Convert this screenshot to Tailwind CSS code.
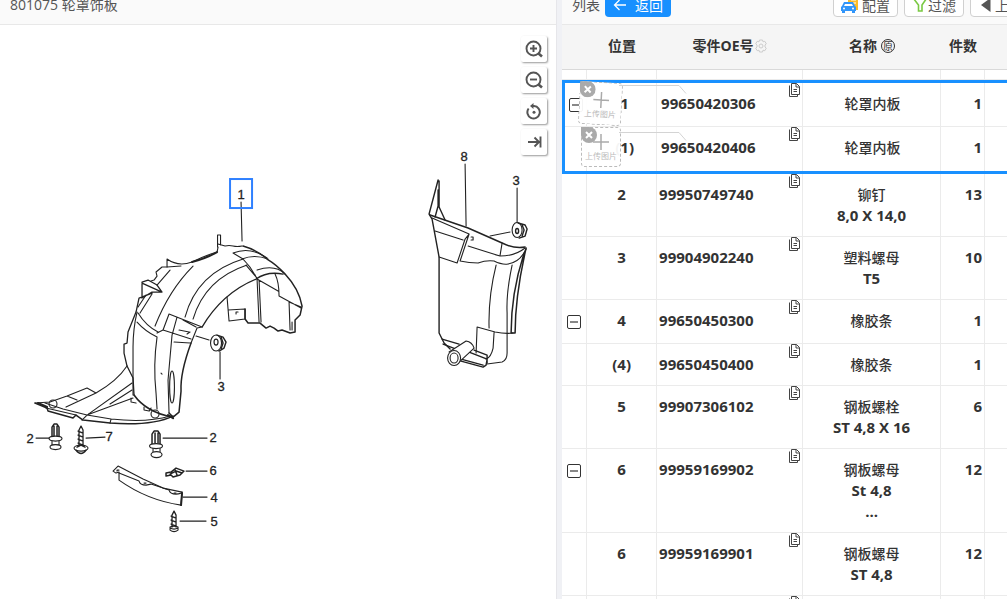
<!DOCTYPE html>
<html lang="zh-CN">
<head>
    <meta charset="UTF-8">
    <meta name="viewport" content="width=device-width, initial-scale=1.0">
    <title>801075 轮罩饰板</title>
    <script src="https://cdn.jsdelivr.net/npm/@tailwindcss/browser@4"></script>
</head>
<body class="h-screen overflow-hidden bg-white text-[14px] text-[#333] font-['Open_Sans','Noto_Sans_CJK_SC',sans-serif]">
    <div class="grid grid-cols-[5fr_6px_4fr] h-full">

        <!-- Diagram panel -->
        <section class="flex flex-col min-w-0 overflow-hidden">
            <header class="flex items-end h-[25px] shrink-0 px-2.5 pb-2 bg-[#fafafa] border-b border-[#e8e8e8]">
                <h1 class="leading-[22px] text-[#555]">801075 轮罩饰板</h1>
            </header>
            <div class="relative flex-1 min-h-0">
                <svg class="w-full" viewBox="0 25 556 574" fill="none" stroke="#222" stroke-width="1.1" stroke-linejoin="round" stroke-linecap="round" role="img" aria-label="轮罩饰板">
                    <!-- wheel housing liner -->
                    <g>
                        <path d="M217.500 247V235h3v10M218 244l7 2q4-1 8 0t9 0M218 247l-1 5q-11 3-25 10-14 5-25-3v8l14-1"/>
                        <path d="M217 252q-10 6-25 10" stroke-width="2"/>
                        <path d="M167 267h-5l-6 5 1 4-3 4-3 1M170 270l-13 15"/>
                        <path d="M142 282l6-2 9 5 5 7h-10l-10 6zM142 283l20 9M152 293l-13 5-3 14-8 20-1 11-3 1v9l3 13 6 12 1 17" stroke-width="1.300"/>
                        <path d="M152 294l-12 19M146 295l-8 12M137 312q-4 17-4 35v48M138 313q8 13 20 19M137 322q8 9 20 15M157 337q-4 28-1 56l1 16"/>
                        <path d="M193 266q-24 24-38 60M243 259q-46 14-58 58M247 265q-42 14-54 54"/>
                        <path d="M283 274q-16-3-27 5-34 14-54 48" stroke-width="1.300"/>
                        <path d="M233 253q17-7 34 5M242 259q12-5 26 0M246 265l11 13M233 253l10 6q9 9 14 20M257 270q18-6 28 4"/>
                        <path d="M243 246q14 4 24 13 10 6 18 15 14 15 17 32l-2 9-5 5v12l-5 1-8-3-4 1-4-3-4-2-4 2-6-5h-12l-3-4v-10" stroke-width="1.500"/>
                        <path d="M227 297l2 24 16-2v-10l-17 1M236 314v-2h2M257 279l2 43M259 280l2 42M257 279l21 12M275 274q4 8 4 22l22 12M289 302l1 28M289 302l12 5M292 322v8"/>
                        <path d="M169 314l33 13-5 1-6 15M169 314l-6 16-6 3M163 330l28 9M177 317l-5 18-4 45 1 33M174 342l16 1M183 320l13 7M179 330l10 2M187 334l3-2" />
                        <path d="M191 343q-11 30-10 48l-2 21-6 5-4-4" stroke-width="1.500"/>
                        <ellipse cx="172" cy="387" rx="2.400" ry="16"/>
                        <path d="M161 373l1 1M196 336l13 4"/>
                    </g>
                    <!-- front lip -->
                    <g>
                        <path d="M35 403l15-1 17-6 20-8 9 5-30 14M67 396l10 4M96 393q21-12 31-27"/>
                        <path d="M35 403l12 5 1 3 25 7 3-3 7 5 27 3q42 3 63-7" stroke-width="1.500"/>
                        <path d="M45 403l18 6 24 6 24 4q36 4 59-3M46 408l30 7M82 420l5-5M110 423l1-4M87 415l45-32M87 415l46-17M110 404l22-14"/>
                        <path d="M134 395q12 17 38 22" stroke-width="1.600"/>
                        <path d="M131 398v4l5 1M144 407v3l5 1 2-3"/>
                        <circle cx="155" cy="414" r="4"/>
                        <circle cx="53" cy="404" r="4"/>
                        <path d="M38 403l9 4M168 415l5 3" stroke-width="2.200"/>
                    </g>
                    <!-- nuts -->
                    <g>
                        <ellipse cx="216" cy="343" rx="5.500" ry="8"/>
                        <ellipse cx="216" cy="342" rx="2" ry="3" stroke-width="1.200"/>
                        <path d="M217 335l6 2 3 5-2 6-5 3M221 337l2 6-2 6" stroke-width="1.400"/>
                    </g>
                    <g>
                        <ellipse cx="517" cy="230" rx="5" ry="7.500"/>
                        <ellipse cx="517" cy="231" rx="1.500" ry="2.500" stroke-width="1.400"/>
                        <path d="M518 223l7 2 2 4-2 7-6 2M522 225l2 5-2 6" stroke-width="1.400"/>
                    </g>
                    <!-- push clips -->
                    <g fill="#fff">
                        <path d="M52 438v-11l2-3h3l2 3v11zM54 426v10M57 426v10" stroke-width="1.500"/>
                        <path d="M52 440v5h7v-5"/>
                        <ellipse cx="55.500" cy="438.500" rx="6.500" ry="2.500"/>
                        <ellipse cx="55.500" cy="447" rx="5.500" ry="2.500"/>
                        <path d="M152 445v-11l2-3h4l2 3v11zM155 433v10M158 433v10" stroke-width="1.500"/>
                        <path d="M153 447v6h7v-6"/>
                        <ellipse cx="156" cy="446" rx="6.500" ry="2.500"/>
                        <ellipse cx="156.500" cy="454.500" rx="5.500" ry="3"/>
                    </g>
                    <!-- screws -->
                    <g>
                        <path d="M81 426l-2 4v15M81 426l2 4v15M78 431l5 2M78 435l5 2M78 439l5 2M78 443l5 2" stroke-width="1.300"/>
                        <ellipse cx="81" cy="448" rx="7" ry="3"/>
                        <path d="M76 450q5 7 10 0M77 447l4-2 4 2" stroke-width="1.500"/>
                        <path d="M174 511l-2 4v12M174 511l2 4v12M171 516l5 2M171 520l5 2M171 524l5 2" stroke-width="1.300"/>
                        <path d="M170 527q4-2 8 0v3q-4 3-8 0zM170 528q4 2 8 0"/>
                    </g>
                    <!-- strip and spring nut -->
                    <g>
                        <path d="M119 480v-8l-3 1-3-2 5-5 25 13 20 9 19 4-1 13q-34-5-62-25"/>
                        <path d="M119 473l20 8q1 4 7 4l5-1 18 6q1 4 7 4 5 0 6-2"/>
                        <path d="M182 493l-1 12" stroke-width="2"/>
                        <path d="M117 471v-1h2M144 483h2M174 493h2"/>
                        <path d="M166 473l5-1 5-4 8 3-4 4-7 2-2-2-5 1zM170 474l6-3 6 2M175 470l2 5" stroke-width="1.500"/>
                    </g>
                    <!-- rear liner -->
                    <g>
                        <path d="M438 180l-9 34 3 5 7 38v76l5 10 6 6M439 181v26l6 13M438 190v16l-3 11" stroke-width="1.400"/>
                        <path d="M430 215l38 13 34 15q12 6 23 4" stroke-width="1.500"/>
                        <path d="M432 218l37 16-4 5-8 24-18-6M435 231l28 9M469 234l-9 27q9 2 18 2 8-3 16-2 8 4 14 3 12-2 18-15"/>
                        <path d="M468 246q22 7 32 10 15 0 25-8M502 243l-2 12M471 240h2v-3h-2"/>
                        <path d="M526 248q-11 48-11 85l-4 0q0-40 13-80" stroke-width="1.500"/>
                        <path d="M496 265q-8 32-7 63M512 265q-6 28-5 48v40q0 7-5 9l-15 2"/>
                        <path d="M476 353l1-26 18 5q10 2 18 1M494 332l-1 16q-2 9-7 11"/>
                        <path d="M442 339l17 5M443 344l13 5M469 352l18 7-1 6-3 2-22-6M474 350l13 5v8M461 359l22 6" stroke-width="1.400"/>
                        <path d="M449 352l17-11q6 1 8 7l-15 14" fill="#fff"/>
                        <ellipse cx="454" cy="358" rx="6.500" ry="7.500" fill="#fff"/>
                        <ellipse cx="454" cy="358" rx="4" ry="5"/>
                    </g>
                    <!-- leaders -->
                    <path d="M241 202l1 39M220 352v27M465 164l1 62M517 188v34M490 236l20-4M36 438h13M86 438l19-1M163 438h44M186 471h21M183 497h24M180 521h26"/>
                    <!-- callouts -->
                    <g class="font-['Liberation_Sans',sans-serif] text-[13px]" fill="#222" stroke="#222" stroke-width="0.300" text-anchor="middle">
                        <text x="241" y="199">1</text>
                        <text x="464" y="161">8</text>
                        <text x="516" y="185">3</text>
                        <text x="221" y="391">3</text>
                        <text x="30" y="443">2</text>
                        <text x="109" y="441">7</text>
                        <text x="213" y="442">2</text>
                        <text x="213" y="475">6</text>
                        <text x="214" y="502">4</text>
                        <text x="214" y="526">5</text>
                    </g>
                    <rect x="230" y="179" width="22" height="29" stroke="#2f80ff" stroke-width="2" stroke-linejoin="miter"/>
                </svg>

                <div class="absolute top-[11px] right-[9px] flex flex-col gap-[5px]">
                    <button type="button" aria-label="放大" class="grid place-items-center size-[26px] rounded-xs bg-white shadow-[1px_1px_2px_#999]">
                        <svg class="size-[18px]" viewBox="0 0 18 18" fill="none" stroke="#555" stroke-width="1.900"><circle cx="8.500" cy="8.500" r="7"/><path d="M5 8.500h7M8.500 5v7"/><path d="M13.500 13.500l3.500 3" stroke-width="2.600"/></svg>
                    </button>
                    <button type="button" aria-label="缩小" class="grid place-items-center size-[26px] rounded-xs bg-white shadow-[1px_1px_2px_#999]">
                        <svg class="size-[18px]" viewBox="0 0 18 18" fill="none" stroke="#555" stroke-width="1.900"><circle cx="8.500" cy="8.500" r="7"/><path d="M5 8.500h7"/><path d="M13.500 13.500l3.500 3" stroke-width="2.600"/></svg>
                    </button>
                    <button type="button" aria-label="重置" class="grid place-items-center size-[26px] rounded-xs bg-white shadow-[1px_1px_2px_#999]">
                        <svg class="size-[18px]" viewBox="0 0 18 18" fill="none" stroke="#555" stroke-width="2"><path d="M3.600 6.500A6.200 6.200 0 1 0 9 4H6"/><path d="M8.500 1L5 4l3.500 3z" fill="#555" stroke="none"/><circle cx="9" cy="10.200" r="1.500" fill="#555" stroke="none"/></svg>
                    </button>
                    <button type="button" aria-label="收起" class="grid place-items-center size-[26px] rounded-xs bg-white shadow-[1px_1px_2px_#999]">
                        <svg class="size-[18px]" viewBox="0 0 18 18" fill="none" stroke="#555" stroke-width="1.900"><path d="M3 9h11M9.500 4.500L14 9l-4.500 4.500M15.500 3.500v11"/></svg>
                    </button>
                </div>
            </div>
        </section>

        <!-- Splitter -->
        <div class="bg-[#f0f1f5] border-l border-[#e6e6ea]"></div>

        <!-- Parts list panel -->
        <section class="flex flex-col min-w-0 overflow-hidden">
            <header class="flex items-end h-[25px] shrink-0 pl-2.5 pb-[7px] bg-[#fafafa] border-b border-[#e8e8e8] text-[#555]">
                <h2 class="leading-6 mr-[5px]">列表</h2>
                <button type="button" class="flex items-center gap-2 h-6 px-2 rounded-sm bg-[#1890ff] text-white">
                    <svg class="size-[14px]" viewBox="0 0 14 14" fill="none" stroke="#fff" stroke-width="1.300"><path d="M13 7H1.500M6.500 2l-5 5 5 5"/></svg>返回
                </button>
                <div class="flex gap-1.5 w-[174px] ml-auto">
                    <button type="button" class="flex items-center gap-[3px] h-6 px-[7px] shrink-0 rounded-sm border border-[#d0d0d0] bg-white">
                        <svg class="size-[18px]" viewBox="0 0 18 18"><path d="M7 0h10v14H7z" fill="#fbbd2a"/><path d="M10 4h5M10 7h5" stroke="#fff"/><path d="M3 6h9l2 4 1 1v4h-1v2h-3v-2H4v2H1v-2H0v-4l1-1z" fill="#3296fa"/><path d="M4 8h7l1 2H3z" fill="#fff"/><circle cx="3" cy="12.500" r="1" fill="#fff"/><circle cx="12" cy="12.500" r="1" fill="#fff"/></svg>配置
                    </button>
                    <button type="button" class="flex items-center h-6 px-[7px] shrink-0 rounded-sm border border-[#d0d0d0] bg-white">
                        <svg class="size-4" viewBox="0 0 16 16" fill="none" stroke="#7ac943" stroke-width="1.600"><path d="M1.500 1.500h13L10 8v6H6.500V8z"/></svg>过滤
                    </button>
                    <button type="button" class="flex items-center gap-1 h-6 w-20 px-2.5 shrink-0 rounded-sm border border-[#d0d0d0] bg-white">
                        <svg class="w-2.5 h-3.5" viewBox="0 0 10 14"><path d="M9.500 0v14L0 7z" fill="#555"/></svg>上
                    </button>
                </div>
            </header>

            <table class="table-fixed w-full border-separate border-spacing-0 font-bold">
                <colgroup>
                    <col class="w-[25px]"><col class="w-[70px]"><col class="w-[146px]"><col><col class="w-11"><col class="w-[22px]">
                </colgroup>
                <thead>
                    <tr class="h-[45px] bg-[#f5f5f5]">
                        <th class="pb-[3px] border-b border-[#d9d9d9]"></th>
                        <th class="pb-[3px] border-b border-[#d9d9d9]">位置</th>
                        <th class="pb-[3px] border-b border-[#d9d9d9]">
                            <span class="flex items-center justify-center">零件OE号<svg class="size-[14px]" viewBox="0 0 14 14" fill="none" stroke="#ccc"><path d="M5.500 1h3l.5 1.800 1.800-.5 1.500 2.500L11 6v2l1.300 1.200-1.500 2.500-1.800-.5-.5 1.800h-3L5 11.200l-1.800.5-1.500-2.500L3 8V6L1.700 4.800l1.500-2.500 1.800.5z"/><circle cx="7" cy="7" r="2"/></svg></span>
                        </th>
                        <th class="pb-[3px] border-b border-[#d9d9d9]">
                            <span class="flex items-center justify-center gap-1">名称<span class="grid place-items-center size-[14px] rounded-full border border-[#333] text-[10px] leading-none font-normal">原</span></span>
                        </th>
                        <th class="pb-[3px] border-b border-[#d9d9d9]">件数</th>
                        <th class="pb-[3px] border-b border-[#d9d9d9]"></th>
                    </tr>
                    <tr class="h-2.5">
                        <td class="border-r border-b border-[#ebebeb]"></td>
                        <td class="border-r border-b border-[#ebebeb]"></td>
                        <td class="border-r border-b border-[#ebebeb]"></td>
                        <td class="border-r border-b border-[#ebebeb]"></td>
                        <td class="border-r border-b border-[#ebebeb]"></td>
                        <td class="border-b border-[#ebebeb]"></td>
                    </tr>
                </thead>
                <tbody id="selected" class="relative after:absolute after:inset-0 after:border-[3px] after:border-r-0 after:border-[#1890ff] after:pointer-events-none"></tbody>
                <tbody id="parts"></tbody>
            </table>
        </section>
    </div>

    <script>
        const selected = [
            { pos: '1', oe: '99650420306', name: '轮罩内板', qty: 1, group: true, tilt: true },
            { pos: '(1)', oe: '99650420406', name: '轮罩内板', qty: 1 },
        ];
        const parts = [
            { pos: '2', oe: '99950749740', name: '铆钉', spec: ['8,0 X 14,0'], qty: 13 },
            { pos: '3', oe: '99904902240', name: '塑料螺母', spec: ['T5'], qty: 10 },
            { pos: '4', oe: '99650450300', name: '橡胶条', qty: 1, group: true },
            { pos: '(4)', oe: '99650450400', name: '橡胶条', qty: 1 },
            { pos: '5', oe: '99907306102', name: '钢板螺栓', spec: ['ST 4,8 X 16'], qty: 6 },
            { pos: '6', oe: '99959169902', name: '钢板螺母', spec: ['St 4,8', '...'], qty: 12, group: true },
            { pos: '6', oe: '99959169901', name: '钢板螺母', spec: ['ST 4,8'], qty: 12 },
            { pos: '', oe: '', name: '', qty: '' },
        ];

        const minus = `<button type="button" aria-label="收起" class="grid place-items-center size-[14px] mx-auto mt-[5px] border border-[#333] rounded-xs bg-white"><span class="w-2 h-0.5 bg-[#888]"></span></button>`;

        const copy = `<button type="button" aria-label="复制" class="absolute top-0 right-0.5"><svg class="w-[11px] h-3.5" viewBox="0 0 11 14" fill="#fff" stroke="#444"><path d="M.5 2.500v11h8v-2"/><path d="M2.500.5h5l3 3v8h-8z"/><path d="M7 .5V4h3.500M4.500 6.500H8M4.500 8.500H8" fill="none"/></svg></button>`;

        const upload = (tilt) => `
            <div class="absolute z-10 ${tilt ? 'top-0.5 -left-2 rotate-3 size-[43px]' : 'top-0 -left-1.5 size-10'}">
                <button type="button" class="relative flex flex-col items-center justify-end w-full h-full pb-1 rounded-sm border border-dashed border-[#bbb] bg-white/95 text-[#bbb] text-[8px] leading-[12px] font-normal">
                    <svg class="size-4" viewBox="0 0 16 16" stroke="#aaa" stroke-width="1.500"><path d="M8 0v16M0 8h16"/></svg>上传图片
                </button>
                <svg class="absolute top-0 left-0 size-4" viewBox="0 0 16 16"><path d="M0 0h8a8 8 0 1 1-8 8z" fill="#aaa"/><path d="M5 5l6 6M11 5l-6 6" stroke="#fff" stroke-width="2"/></svg>
            </div>`;

        // connector between the thumbnail and the part number
        const connector = `<svg class="absolute top-1 right-[-31px] z-10 w-[68px] h-2.5 pointer-events-none" viewBox="0 0 68 10" fill="none" stroke="#d4d4d4"><path d="M0 1.500h60l7 8"/></svg>`;

        const row = (p, hot) => `
            <tr class="${hot ? 'h-[47px]' : p.group && !p.spec ? 'h-11' : 'h-[42px]'} align-top text-[15px] leading-[21px]">
                <td class="border-r border-b border-[#ebebeb] ${p.tilt ? 'pt-[13px] pl-1' : 'pt-2.5'}">${p.group ? minus : ''}</td>
                <td class="relative border-r border-b border-[#ebebeb] text-center ${p.tilt ? 'pt-[13px]' : 'pt-2.5'} ${hot ? 'pl-1.5' : ''}">${p.pos}${hot ? upload(p.tilt) + connector : ''}</td>
                <td class="relative border-r border-b border-[#ebebeb] ${p.tilt ? 'pt-[13px]' : 'pt-2.5'} ${hot ? 'pl-1' : 'pl-0.5'}">${p.oe}${hot ? `<div class="absolute right-0 ${p.tilt ? 'top-[3px]' : 'top-0'}">${copy}</div>` : copy}</td>
                <td class="border-r border-b border-[#ebebeb] text-center pb-2.5 ${p.tilt ? 'pt-[13px]' : 'pt-2.5'} ${hot ? 'pl-0.5' : ''}"><div class="text-[14px] font-medium">${p.name}</div>${(p.spec || []).map(s => `<div>${s}</div>`).join('')}</td>
                <td class="border-r border-b border-[#ebebeb] text-right pr-0.5 ${p.tilt ? 'pt-[13px]' : 'pt-2.5'}">${p.qty}</td>
                <td class="border-b border-[#ebebeb]"></td>
            </tr>`;

        document.getElementById('selected').innerHTML = selected.map(p => row(p, true)).join('');
        document.getElementById('parts').innerHTML = parts.map(p => row(p, false)).join('');
    </script>
</body>
</html>
